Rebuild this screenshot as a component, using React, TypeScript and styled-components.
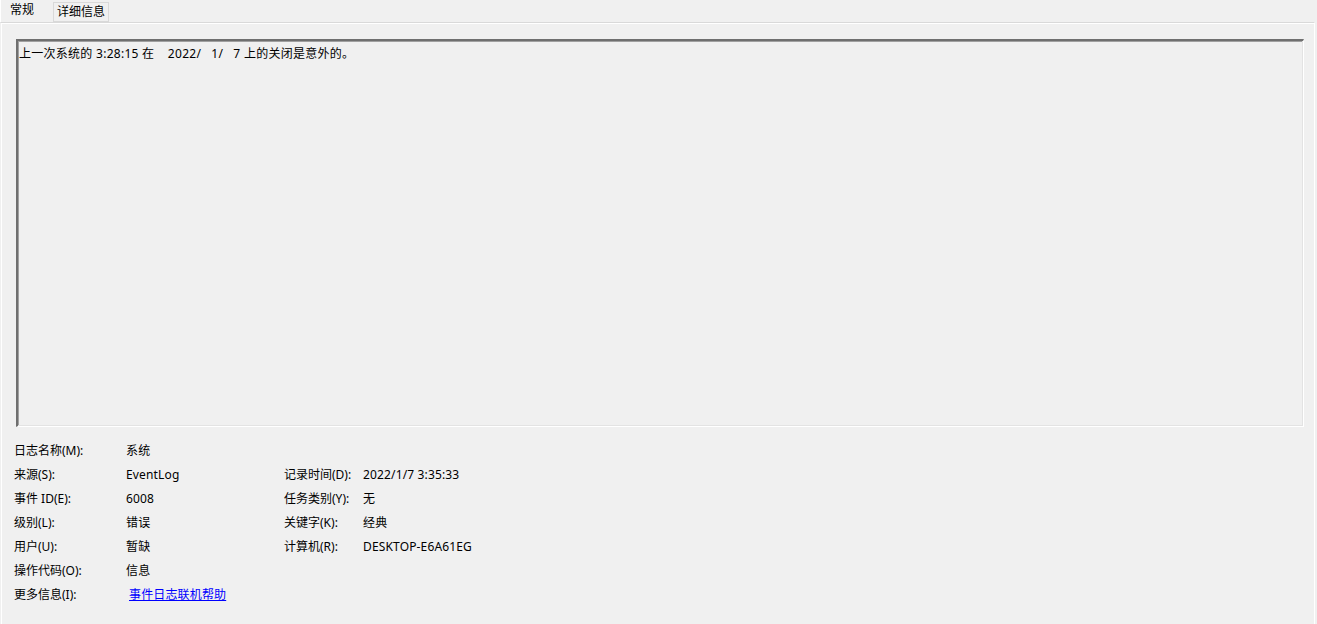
import * as React from "react";
import styled, { createGlobalStyle } from "styled-components";

const GlobalStyle = createGlobalStyle`
  html, body {
    margin: 0;
    padding: 0;
    background: #f0f0f0;
  }
  body {
    font-family: "Noto Sans", "Noto Sans CJK SC", "Liberation Sans", sans-serif;
    font-size: 12px;
    color: #000;
  }
`;

const Window = styled.section`
  width: 1317px;
  height: 624px;
  display: flex;
  flex-direction: column;
  background: #f0f0f0;
  overflow: hidden;
`;

const TabStrip = styled.nav`
  height: 22px;
  display: flex;
  align-items: flex-end;
  position: relative;
  z-index: 1;
`;

const Tab = styled.div<{ $active?: boolean }>`
  box-sizing: border-box;
  height: ${(p) => (p.$active ? "23px" : "20px")};
  padding: 0 ${(p) => (p.$active ? "9px" : "3px")};
  margin-left: ${(p) => (p.$active ? "0" : "1px")};
  display: flex;
  align-items: center;
  line-height: 1;
  background: #f0f0f0;
  border: 1px solid ${(p) => (p.$active ? "#ffffff" : "#d9d9d9")};
  border-bottom: ${(p) => (p.$active ? "none" : "1px solid #d9d9d9")};
  border-right-color: ${(p) => (p.$active ? "#f0f0f0" : "#d9d9d9")};
  padding-bottom: ${(p) => (p.$active ? "3px" : "0")};
  width: ${(p) => (p.$active ? "52px" : "auto")};
`;

const Panel = styled.div`
  flex: 1;
  box-sizing: border-box;
  margin-right: 2px;
  border-top: 1px solid #d9d9d9;
  box-shadow: inset 1px 1px 0 #ffffff;
  border-left: 1px solid #f0f0f0;
  border-right: 1px solid #ffffff;
  padding: 16px 12px 0 15px;
  display: flex;
  flex-direction: column;
`;

const MessageBox = styled.div`
  box-sizing: border-box;
  height: 388px;
  width: 1288px;
  border-top: 2px solid #6f6f6f;
  border-left: 2px solid #6f6f6f;
  border-right: 1px solid #ffffff;
  border-bottom: 1px solid #ffffff;
  box-shadow: inset -1px -1px 0 #e3e3e3, inset 1px 1px 0 #a0a0a0;
  padding: 4px 1px;
  line-height: 18px;
  letter-spacing: 0.27px;
  white-space: pre;
`;

const Fields = styled.dl`
  margin: 11px 0 0 -2px;
  display: grid;
  grid-template-columns: 112px 158px 79px auto;
  grid-auto-rows: 24px;
  align-items: center;
`;

const Label = styled.dt<{ $col: number }>`
  margin: 0;
  grid-column: ${(p) => p.$col};
  white-space: nowrap;
`;

const Value = styled.dd<{ $col: number }>`
  margin: 0;
  grid-column: ${(p) => p.$col};
  white-space: nowrap;
  letter-spacing: 0.15px;
`;

const HelpLink = styled.a`
  color: #0000ff;
  text-decoration: underline;
  margin-left: 3px;
  cursor: pointer;
`;

type Pair = [string, React.ReactNode];

const rows: { left: Pair; right?: Pair }[] = [
  { left: ["日志名称(M):", "系统"] },
  { left: ["来源(S):", "EventLog"], right: ["记录时间(D):", "2022/1/7 3:35:33"] },
  { left: ["事件 ID(E):", "6008"], right: ["任务类别(Y):", "无"] },
  { left: ["级别(L):", "错误"], right: ["关键字(K):", "经典"] },
  { left: ["用户(U):", "暂缺"], right: ["计算机(R):", "DESKTOP-E6A61EG"] },
  { left: ["操作代码(O):", "信息"] },
  { left: ["更多信息(I):", <HelpLink key="l">事件日志联机帮助</HelpLink>] },
];

export default function App() {
  return (
    <Window>
      <GlobalStyle />
      <TabStrip>
        <Tab $active>常规</Tab>
        <Tab>详细信息</Tab>
      </TabStrip>
      <Panel>
        <MessageBox>{"上一次系统的 3:28:15 在    2022/   1/   7 上的关闭是意外的。"}</MessageBox>
        <Fields>
          {rows.map((r, i) => (
            <React.Fragment key={i}>
              <Label $col={1} style={{ gridRow: i + 1 }}>{r.left[0]}</Label>
              <Value $col={2} style={{ gridRow: i + 1 }}>{r.left[1]}</Value>
              {r.right && (
                <>
                  <Label $col={3} style={{ gridRow: i + 1 }}>{r.right[0]}</Label>
                  <Value $col={4} style={{ gridRow: i + 1 }}>{r.right[1]}</Value>
                </>
              )}
            </React.Fragment>
          ))}
        </Fields>
      </Panel>
    </Window>
  );
}
